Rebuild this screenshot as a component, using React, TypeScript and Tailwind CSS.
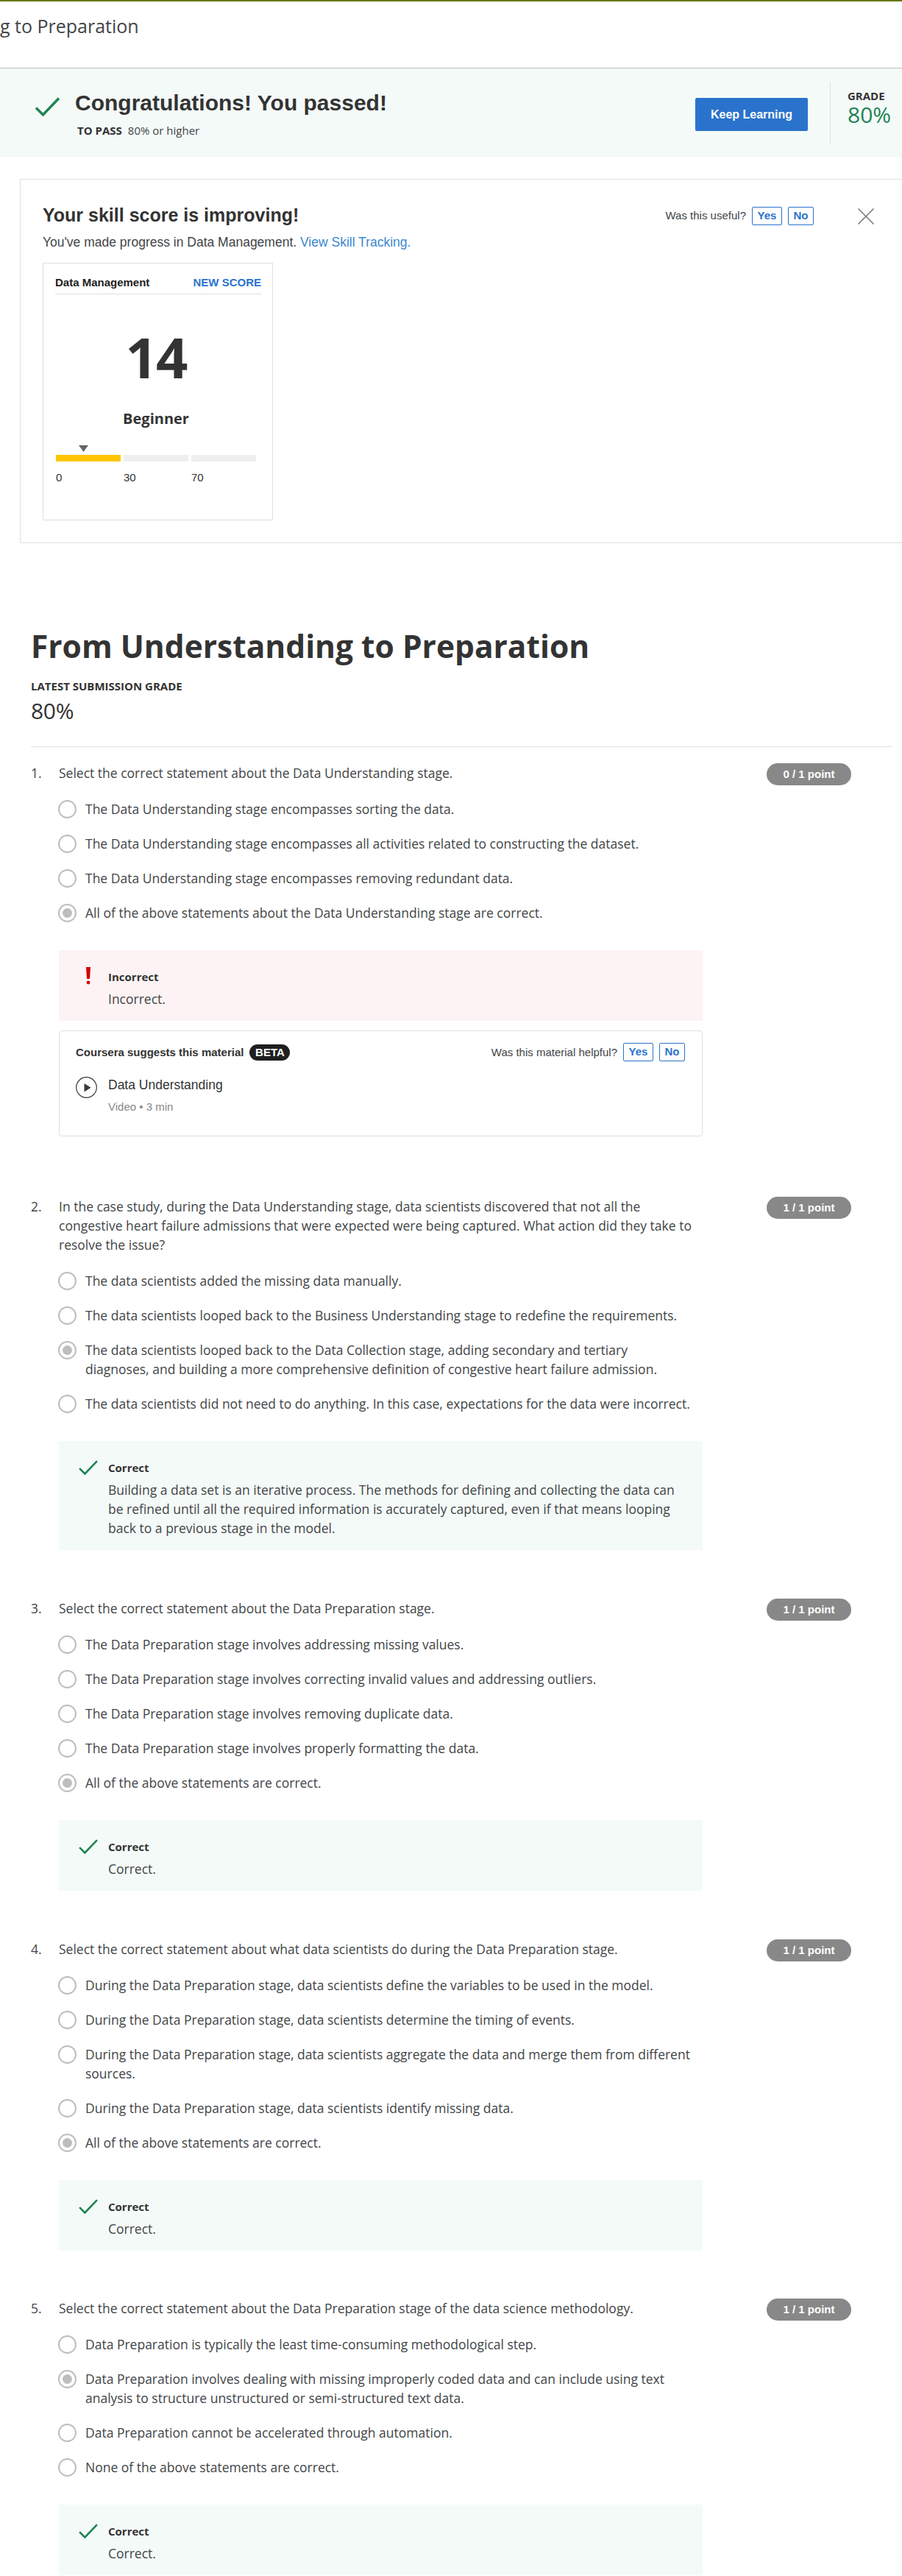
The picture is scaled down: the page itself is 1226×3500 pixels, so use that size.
import React from 'react';

const Check = ({ className }: { className: string }) => (
  <svg viewBox="0 0 33 26" className={className} fill="none" stroke="#1f8354" strokeWidth="3.4">
    <path d="M1 14.5 L10.5 24 L32 1.5" />
  </svg>
);

const Radio = ({ on }: { on?: boolean }) => (
  <span className="mt-[1px] flex h-[25px] w-[25px] shrink-0 items-center justify-center rounded-full border-2 border-[#bdbdbd]">
    {on && <span className="h-[13px] w-[13px] rounded-full bg-[#bdbdbd]" />}
  </span>
);

const YesNo = () => (
  <div className="flex gap-2 text-[15px] font-bold text-[#2a73cc]">
    <button className="h-[25px] w-[41px] rounded-[2px] border border-[#2a73cc] pb-[2px] leading-[21px]">Yes</button>
    <button className="h-[25px] w-[35px] rounded-[2px] border border-[#2a73cc] pb-[2px] leading-[21px]">No</button>
  </div>
);

type Q = {
  text: string[];
  points: string;
  options: string[][];
  chosen: number;
  feedback: string[];
  ok: boolean;
  height: string;
};

const questions: Q[] = [
  {
    text: ['Select the correct statement about the Data Understanding stage.'],
    points: '0 / 1 point',
    options: [
      ['The Data Understanding stage encompasses sorting the data.'],
      ['The Data Understanding stage encompasses all activities related to constructing the dataset.'],
      ['The Data Understanding stage encompasses removing redundant data.'],
      ['All of the above statements about the Data Understanding stage are correct.'],
    ],
    chosen: 3,
    feedback: ['Incorrect.'],
    ok: false,
    height: 'h-[589px]',
  },
  {
    text: [
      'In the case study, during the Data Understanding stage, data scientists discovered that not all the',
      'congestive heart failure admissions that were expected were being captured. What action did they take to',
      'resolve the issue?',
    ],
    points: '1 / 1 point',
    options: [
      ['The data scientists added the missing data manually.'],
      ['The data scientists looped back to the Business Understanding stage to redefine the requirements.'],
      [
        'The data scientists looped back to the Data Collection stage, adding secondary and tertiary',
        'diagnoses, and building a more comprehensive definition of congestive heart failure admission.',
      ],
      ['The data scientists did not need to do anything. In this case, expectations for the data were incorrect.'],
    ],
    chosen: 2,
    feedback: [
      'Building a data set is an iterative process. The methods for defining and collecting the data can',
      'be refined until all the required information is accurately captured, even if that means looping',
      'back to a previous stage in the model.',
    ],
    ok: true,
    height: 'h-[546px]',
  },
  {
    text: ['Select the correct statement about the Data Preparation stage.'],
    points: '1 / 1 point',
    options: [
      ['The Data Preparation stage involves addressing missing values.'],
      ['The Data Preparation stage involves correcting invalid values and addressing outliers.'],
      ['The Data Preparation stage involves removing duplicate data.'],
      ['The Data Preparation stage involves properly formatting the data.'],
      ['All of the above statements are correct.'],
    ],
    chosen: 4,
    feedback: ['Correct.'],
    ok: true,
    height: 'h-[463px]',
  },
  {
    text: ['Select the correct statement about what data scientists do during the Data Preparation stage.'],
    points: '1 / 1 point',
    options: [
      ['During the Data Preparation stage, data scientists define the variables to be used in the model.'],
      ['During the Data Preparation stage, data scientists determine the timing of events.'],
      ['During the Data Preparation stage, data scientists aggregate the data and merge them from different', 'sources.'],
      ['During the Data Preparation stage, data scientists identify missing data.'],
      ['All of the above statements are correct.'],
    ],
    chosen: 4,
    feedback: ['Correct.'],
    ok: true,
    height: 'h-[488px]',
  },
  {
    text: ['Select the correct statement about the Data Preparation stage of the data science methodology.'],
    points: '1 / 1 point',
    options: [
      ['Data Preparation is typically the least time-consuming methodological step.'],
      [
        'Data Preparation involves dealing with missing improperly coded data and can include using text',
        'analysis to structure unstructured or semi-structured text data.',
      ],
      ['Data Preparation cannot be accelerated through automation.'],
      ['None of the above statements are correct.'],
    ],
    chosen: 1,
    feedback: ['Correct.'],
    ok: true,
    height: 'h-[380px]',
  },
];

const Lines = ({ lines }: { lines: string[] }) => (
  <>
    {lines.map((l) => (
      <div key={l} className="whitespace-nowrap">
        {l}
      </div>
    ))}
  </>
);

const Suggestion = () => (
  <div className="mt-[13px] h-[144px] rounded border border-[#dfdfdf] pl-[22px] pr-[23px] pt-[16px] font-['Liberation_Sans',sans-serif]">
    <div className="flex h-[25px] items-center">
      <span className="text-[15px] font-bold text-[#333]">Coursera suggests this material</span>
      <span className="ml-2 flex h-[22px] w-[55px] items-center justify-center rounded-full bg-[#1f1f1f] text-[15px] font-bold leading-[20px] text-white">
        BETA
      </span>
      <span className="ml-auto mr-2 text-[15px]">Was this material helpful?</span>
      <YesNo />
    </div>
    <div className="mt-[21px] flex gap-[15px]">
      <svg viewBox="0 0 29 29" className="h-[29px] w-[29px]">
        <circle cx="14.5" cy="14.5" r="13.8" fill="none" stroke="#373a3c" strokeWidth="1.2" />
        <path d="M11.5 9 L20.5 14.7 L11.5 20.5 Z" fill="#373a3c" />
      </svg>
      <div>
        <div className="text-[17.5px] leading-[23px] text-[#333]">Data Understanding</div>
        <div className="mt-[9px] text-[15px] leading-[18px] text-[#888]">Video • 3 min</div>
      </div>
    </div>
  </div>
);

export default function App() {
  return (
    <div className="h-[3500px] w-[1226px] overflow-hidden bg-white font-['Open_Sans',sans-serif] text-[#424547]">
      <header className="h-[93px] border-b border-t-2 border-b-[#bdbdbd] border-t-[#667711] pt-[15px] text-[25px] leading-[36px]">
        g to Preparation
      </header>

      <section className="flex h-[120px] bg-[#f4faf8]">
        <Check className="ml-[48px] mt-[39px] h-[26px] w-[33px]" />
        <div className="ml-[21px] pt-[27px]">
          <h1 className="font-['Liberation_Sans',sans-serif] text-[30px] font-bold leading-[40px] text-[#333]">Congratulations! You passed!</h1>
          <div className="ml-[3px] text-[15px] leading-[34px]">
            <b className="mr-[8px] text-[#333]">TO PASS</b>80% or higher
          </div>
        </div>
        <button className="ml-auto mt-[40px] h-[45px] w-[153px] rounded-[2px] bg-[#2a73cc] font-['Liberation_Sans',sans-serif] text-[16px] font-bold text-white">
          Keep Learning
        </button>
        <div className="ml-[30px] mt-[18px] h-[85px] w-[98px] border-l border-[#dfdfdf] pl-[23px] pt-[9px]">
          <div className="text-[15px] font-bold leading-[20px] text-[#333]">GRADE</div>
          <div className="text-[30px] leading-[32px] text-[#1f8354]">80%</div>
        </div>
      </section>

      <section className="ml-[27px] mt-[30px] h-[495px] border border-r-0 border-[#dfdfdf] pl-[30px] pt-[34px] font-['Liberation_Sans',sans-serif]">
        <div className="flex h-[31px] items-center">
          <h2 className="pb-[3px] text-[25px] font-bold leading-[28px] text-[#333]">Your skill score is improving!</h2>
          <span className="ml-auto mr-2 text-[15px]">Was this useful?</span>
          <YesNo />
          <svg viewBox="0 0 22 22" className="ml-[60px] mr-[38px] h-[22px] w-[22px]" stroke="#757575" strokeWidth="1.5">
            <path d="M0.5 0.5 L21.5 21.5 M21.5 0.5 L0.5 21.5" />
          </svg>
        </div>
        <p className="mt-[7px] text-[17.5px] leading-[26px]">
          You've made progress in Data Management. <a className="text-[#3b87d1]">View Skill Tracking.</a>
        </p>
        <div className="mt-[15px] h-[350px] w-[313px] border border-[#dfdfdf] pl-[16px] pr-[15px] pt-[17px]">
          <div className="flex h-[25px] justify-between border-b border-[#dfdfdf] text-[15px] font-bold leading-[18px]">
            <span className="text-[#1f1f1f]">Data Management</span>
            <span className="text-[#2a73cc]">NEW SCORE</span>
          </div>
          <div className="mt-[33px] pr-[6px] text-center font-['Open_Sans',sans-serif] text-[76px] font-bold leading-[104px] tracking-[-2px] text-[#333]">14</div>
          <div className="mt-[18px] pr-[6px] text-center font-['Open_Sans',sans-serif] text-[20px] font-bold leading-[28px] text-[#333]">Beginner</div>
          <svg viewBox="0 0 13 9" className="ml-[32px] mt-[22px] h-[9px] w-[13px]">
            <path d="M0 0 H13 L6.5 9 Z" fill="#666" />
          </svg>
          <div className="ml-px mt-[4px] flex gap-[4px] text-[15px] leading-[18px] text-[#333]">
            {['0', '30', '70'].map((n, i) => (
              <div key={n} className="w-[88px]">
                <div className={i === 0 ? 'h-[9px] bg-[#ffc500]' : 'h-[9px] bg-[#efefef]'} />
                <div className="mt-[13px]">{n}</div>
              </div>
            ))}
          </div>
        </div>
      </section>

      <section className="ml-[42px] mt-[107px] w-[1170px] border-b border-[#dfdfdf] pb-[26px]">
        <h1 className="text-[42.5px] font-bold leading-[66px] text-[#333]">From Understanding to Preparation</h1>
        <div className="mt-[10px] text-[15px] font-bold leading-[22px] text-[#333]">LATEST SUBMISSION GRADE</div>
        <div className="mt-[1px] text-[30px] leading-[44px] tracking-[-0.3px] text-[#333]">80%</div>
      </section>

      <main className="pt-[22px] text-[17.5px] leading-[26px]">
        {questions.map((q, n) => (
          <article key={n} className={q.height + ' flex items-start pl-[42px]'}>
            <div className="w-[38px] shrink-0">{n + 1}.</div>
            <div className="w-[875px] shrink-0">
              <Lines lines={q.text} />
              <div className="-ml-px mt-[23px] flex flex-col gap-[21px]">
                {q.options.map((o, i) => (
                  <div key={i} className="flex gap-[12px]">
                    <Radio on={i === q.chosen} />
                    <div>
                      <Lines lines={o} />
                    </div>
                  </div>
                ))}
              </div>
              <div className={(q.ok ? 'bg-[#f4faf8]' : 'bg-[#fdf3f4]') + ' mt-[38px] flex pb-[17px] pt-[21px]'}>
                <div className="flex w-[67px] justify-center pl-[26px] pr-[14px]">
                  {q.ok ? (
                    <Check className="mt-[5px] h-[20px] w-[26px]" />
                  ) : (
                    <svg viewBox="0 0 6 24" className="mt-[2px] h-[24px] w-[6px]" fill="#d30001">
                      <path d="M0 0 H6 L5 16 H1 Z" />
                      <circle cx="3" cy="21" r="2.4" />
                    </svg>
                  )}
                </div>
                <div>
                  <div className="mb-[2px] text-[15px] font-bold leading-[30px] text-[#333]">{q.ok ? 'Correct' : 'Incorrect'}</div>
                  <Lines lines={q.feedback} />
                </div>
              </div>
              {!q.ok && <Suggestion />}
            </div>
            <div className="ml-[87px] flex h-[30px] w-[115px] items-center justify-center rounded-full bg-[#888] font-['Liberation_Sans',sans-serif] text-[15px] font-bold text-white">
              {q.points}
            </div>
          </article>
        ))}
      </main>
    </div>
  );
}
